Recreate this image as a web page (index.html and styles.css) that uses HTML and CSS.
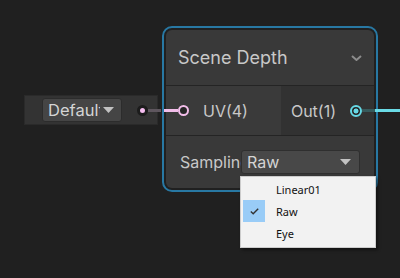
FILE: index.html
```html
<!DOCTYPE html>
<html lang="en">
<head>
    <meta charset="UTF-8">
    <meta name="viewport" content="width=device-width, initial-scale=1.0">
    <title>Scene Depth</title>
    <link rel="stylesheet" href="styles.css">
</head>
<body>

<div class="graph">
    <!-- property node feeding the UV input -->
    <div class="prop-node">
        <div class="prop-field">
            <span class="prop-text">Default</span>
            <svg class="tri" width="11" height="6" viewBox="0 0 11 6"><path d="M0 0H11L5.5 6Z"/></svg>
        </div>
        <span class="prop-dot"></span>
    </div>

    <div class="node-frame">
        <div class="node">
            <div class="node-title">
                <span>Scene Depth</span>
                <svg width="11" height="6" viewBox="0 0 11 6"><path d="M1 1L5.5 5L10 1" fill="none" stroke="#8c8c8c" stroke-width="2"/></svg>
            </div>
            <div class="node-ports">
                <div class="inputs">
                    <span class="ring ring-in"></span>
                    <span>UV(4)</span>
                </div>
                <div class="outputs">
                    <span>Out(1)</span>
                    <span class="ring ring-out"></span>
                </div>
            </div>
            <div class="node-controls">
                <span class="ctrl-label">Sampling</span>
                <div class="select">
                    <span>Raw</span>
                    <svg class="tri" width="11" height="6" viewBox="0 0 11 6"><path d="M0 0H11L5.5 6Z"/></svg>
                </div>
            </div>
        </div>
    </div>

    <!-- edges -->
    <div class="edge edge-in-dim"></div>
    <div class="edge edge-in"></div>
    <div class="edge edge-out-dim"></div>
    <div class="edge edge-out"></div>

    <ul class="menu">
        <li class="menu-item"><span class="check"></span><span>Linear01</span></li>
        <li class="menu-item"><span class="check checked">
            <svg width="9" height="7" viewBox="0 0 9 7"><path d="M0.8 3.6L3.2 5.8L8.2 0.8" fill="none" stroke="#333" stroke-width="1.4"/></svg>
        </span><span>Raw</span></li>
        <li class="menu-item"><span class="check"></span><span>Eye</span></li>
    </ul>
</div>

</body>
</html>
```

FILE: styles.css
```css
body {
    margin: 0;
    background: #202020;
    font-family: Inter, "Noto Sans", sans-serif;
    color: #c8c8c8;
}
.graph {
    position: relative;
    width: 400px;
    height: 278px;
    overflow: hidden;
}
.tri {
    fill: #c2c2c2;
    flex-shrink: 0;
}
/* property node */
.prop-node {
    position: absolute;
    left: 24px;
    top: 95px;
    width: 134px;
    height: 30px;
    box-sizing: border-box;
    background: #333333;
    border: 1px solid #2a2a2a;
    display: flex;
    align-items: center;
    padding-left: 17px;
}
.prop-field {
    width: 80px;
    height: 24px;
    box-sizing: border-box;
    background: #454545;
    border: 1px solid #2c2c2c;
    border-radius: 3px;
    display: flex;
    align-items: center;
    padding-left: 5px;
    gap: 3px;
}
.prop-text {
    width: 52px;
    overflow: hidden;
    white-space: nowrap;
    font-size: 16.5px;
    color: #d4d4d4;
}
.prop-dot {
    width: 11px;
    height: 11px;
    box-sizing: border-box;
    border-radius: 50%;
    background: #f6bdf0;
    border: 3px solid #1c1c1c;
    margin-left: auto;
    margin-right: 9px;
}
/* main node */
.node-frame {
    position: absolute;
    left: 162px;
    top: 26px;
    width: 216px;
    height: 166px;
    box-sizing: border-box;
    border: 2px solid #2878a3;
    border-radius: 10px;
    padding: 2px;
}
.node {
    height: 100%;
    border-radius: 6px;
    overflow: hidden;
    background: #242424;
    display: flex;
    flex-direction: column;
    gap: 1px;
}
.node-title {
    height: 55px;
    flex-shrink: 0;
    background: #393939;
    display: flex;
    align-items: center;
    justify-content: space-between;
    padding: 0 12px;
    font-size: 18px;
}
.node-ports {
    height: 49px;
    flex-shrink: 0;
    display: flex;
    font-size: 16px;
}
.inputs {
    width: 103px;
    background: #3a3a3a;
    display: flex;
    align-items: center;
    padding-left: 12px;
    gap: 14px;
}
.outputs {
    flex: 1;
    background: #323232;
    display: flex;
    align-items: center;
    justify-content: flex-end;
    padding-right: 12px;
    gap: 14px;
}
.ring {
    width: 11px;
    height: 11px;
    box-sizing: border-box;
    border-radius: 50%;
    background: #262626;
}
.ring-in {
    border: 2px solid #f2bde9;
}
.ring-out {
    width: 12px;
    height: 12px;
    border: 2px solid #66d9e6;
    background: radial-gradient(circle, #66d9e6 0 2.2px, #262626 2.8px);
}
.node-controls {
    flex: 1;
    background: #393939;
    display: flex;
    align-items: center;
    padding: 0 14px;
    font-size: 16px;
}
.ctrl-label {
    width: 61px;
    flex-shrink: 0;
    overflow: hidden;
    white-space: nowrap;
}
.select {
    flex: 1;
    height: 24px;
    box-sizing: border-box;
    background: #484848;
    border: 1px solid #2f2f2f;
    border-radius: 3px;
    display: flex;
    align-items: center;
    justify-content: space-between;
    padding: 0 8px 0 5px;
    color: #d4d4d4;
}
/* edges */
.edge {
    position: absolute;
    height: 3px;
    top: 109px;
}
.edge-in-dim {
    left: 148px;
    width: 13px;
    background: #5e565e;
}
.edge-in {
    left: 164px;
    width: 14px;
    background: #f2bde9;
}
.edge-out-dim {
    left: 362px;
    width: 13px;
    background: #375a5c;
}
.edge-out {
    left: 375px;
    width: 25px;
    background: #6adbe6;
}
/* popup menu */
.menu {
    position: absolute;
    left: 240px;
    top: 176px;
    width: 136px;
    height: 72px;
    box-sizing: border-box;
    margin: 0;
    padding: 1px 2px;
    list-style: none;
    background: #f2f2f2;
    border: 1px solid #cccccc;
    box-shadow: 2px 2px 3px rgba(0, 0, 0, 0.45);
    font-family: "Noto Sans", sans-serif;
    font-size: 11px;
    color: #111111;
}
.menu-item {
    height: 22px;
    display: flex;
    align-items: center;
    gap: 11px;
}
.check {
    width: 22px;
    height: 22px;
    display: flex;
    align-items: center;
    justify-content: center;
}
.checked {
    background: #99ccf7;
}
```
